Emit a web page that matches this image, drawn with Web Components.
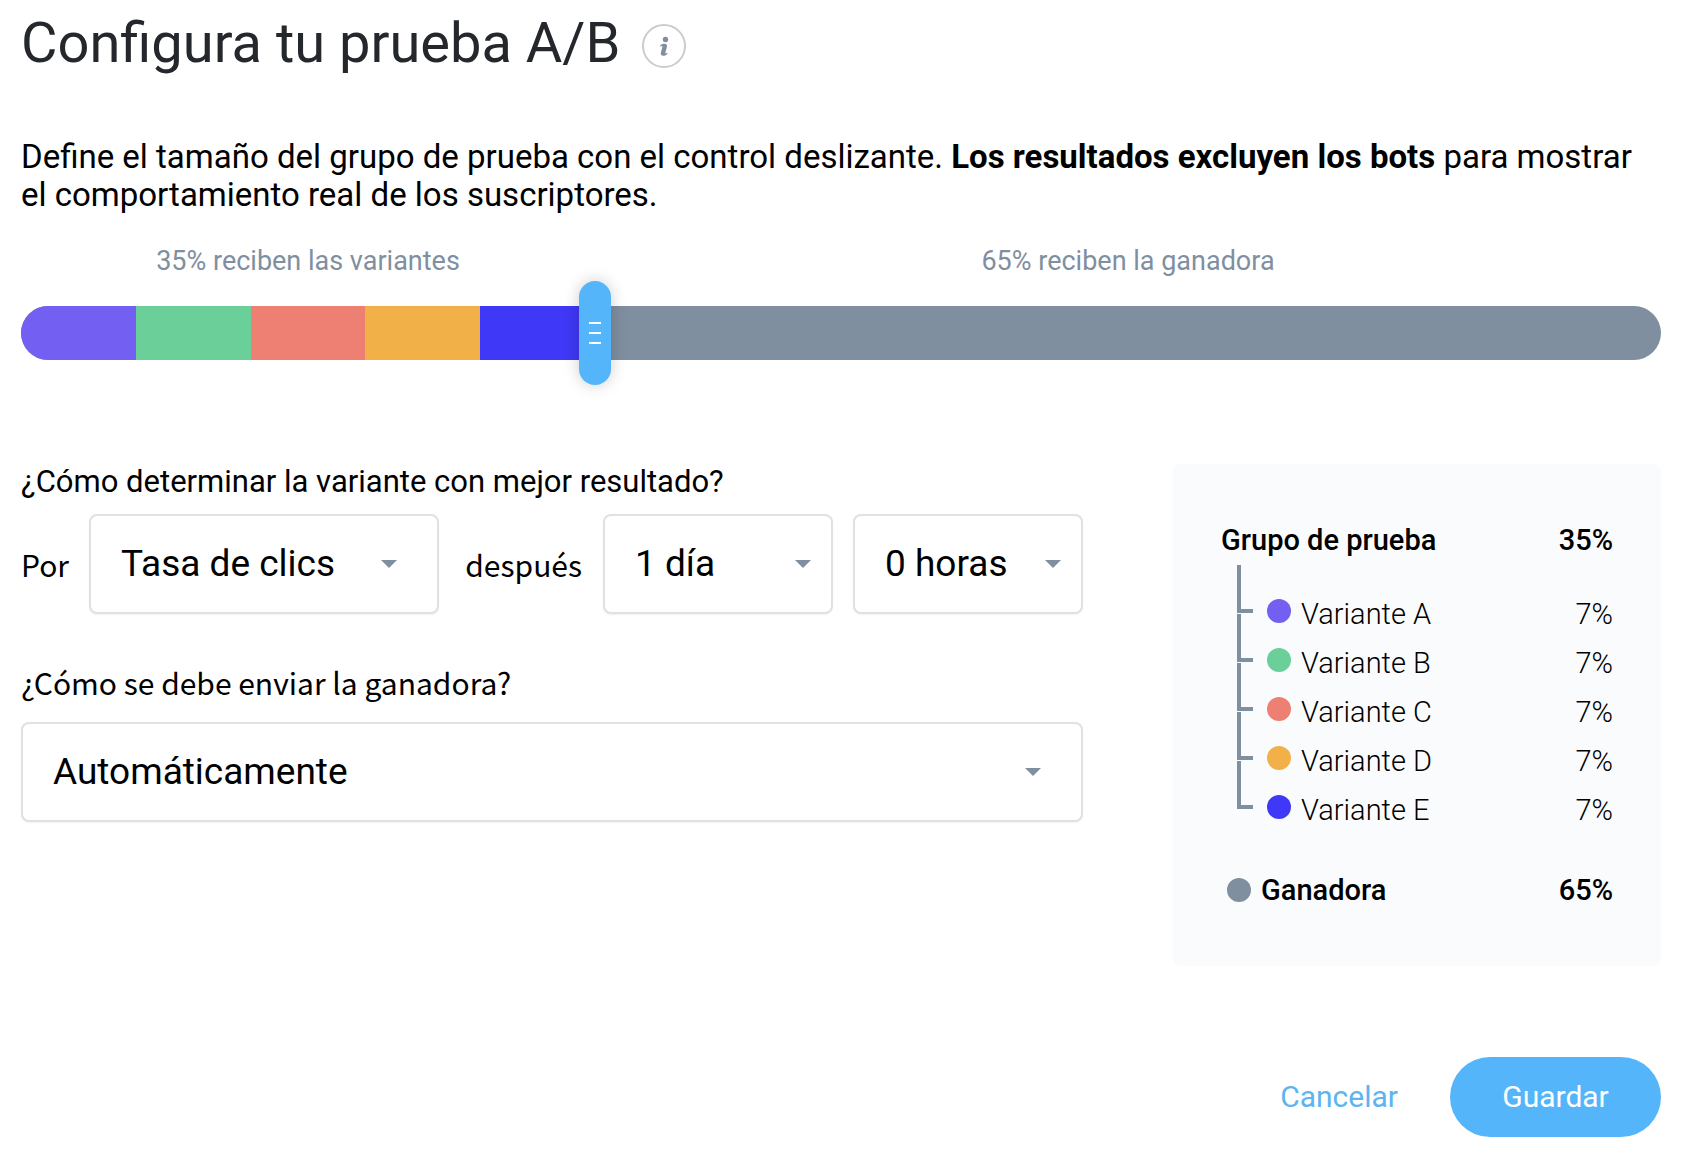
<!DOCTYPE html>
<html lang="es">
<head>
<meta charset="utf-8">
<meta name="viewport" content="width=device-width, initial-scale=1">
<title>Configura tu prueba A/B</title>
<style>
  :root {
    --slate: #7f8fa0;
    --blue: #54b5fa;
    --line: #e0e1e2;
    --panel: #fafbfd;
    --a: #735ff2;
    --b: #6acf99;
    --c: #ed7f73;
    --d: #f1b148;
    --e: #3f38f6;
  }
  body {
    margin: 0;
    background: #fff;
    color: #000;
    font: 400 33px/38px Roboto, "Liberation Sans", sans-serif;
  }
</style>
</head>
<body>
<ab-test-dialog></ab-test-dialog>

<template id="t-dialog">
  <style>
    :host { display: block; padding: 11px 27px 27px 21px; }
    header { display: flex; align-items: center; gap: 22px; }
    h1 { margin: 0; font-size: 56px; line-height: 64px; font-weight: 400; color: #24272c; }
    p { margin: 63px 0 0; }
    b { font-weight: 700; }
    ab-split { margin-top: 31px; }
    .columns { display: grid; grid-template-columns: minmax(0, 1fr) 488px; gap: 90px; margin-top: 79px; align-items: start; }
    footer { display: flex; justify-content: flex-end; align-items: center; gap: 52px; margin-top: 91px; }
  </style>
  <header>
    <h1>Configura tu prueba A/B</h1>
    <ab-info></ab-info>
  </header>
  <p>Define el tamaño del grupo de prueba con el control deslizante. <b>Los resultados excluyen los bots</b> para mostrar el comportamiento real de los suscriptores.</p>
  <ab-split></ab-split>
  <div class="columns">
    <ab-rules></ab-rules>
    <ab-summary></ab-summary>
  </div>
  <footer>
    <ab-button>Cancelar</ab-button>
    <ab-button primary>Guardar</ab-button>
  </footer>
</template>

<template id="t-info">
  <style>
    :host { display: block; padding-top: 6px; }
    button { display: block; box-sizing: border-box; width: 44px; height: 44px; padding: 0; border: 2px solid #cbcccd; border-radius: 50%; background: none; }
    svg { display: block; width: 40px; height: 40px; fill: var(--slate); }
  </style>
  <button type="button" aria-label="Más información">
    <svg viewBox="0 0 40 40" aria-hidden="true">
      <circle cx="21.5" cy="13.5" r="2.7"/>
      <path d="M16 19.7c1.2-1.4 2.8-2 4.4-2 2.2 0 3 1.300 2.500 3.200l-1.500 5.700c-.3 1.100.2 1.400 1.900.2l.4.700c-1.300 1.600-2.800 2.300-4.400 2.300-2.100 0-2.900-1.300-2.400-3.200l1.500-5.700c.3-1.100-.3-1.400-1.900-.4z"/>
    </svg>
  </button>
</template>

<template id="t-split">
  <style>
    :host { display: block; }
    .captions { display: grid; grid-template-columns: 35% 65%; text-align: center; font-size: 27px; line-height: 32px; color: var(--slate); }
    .slider { display: grid; align-items: center; margin-top: 4px; }
    .track, input { grid-area: 1 / 1; }
    .track { display: flex; height: 54px; border-radius: 27px; overflow: hidden; background: var(--slate); }
    .track i { flex: 0 0 7%; }
    input { -webkit-appearance: none; appearance: none; width: calc(100% + 32px); height: 104px; margin: 0 -16px; background: none; }
    input::-webkit-slider-runnable-track { height: 104px; background: none; }
    input::-webkit-slider-thumb {
      -webkit-appearance: none;
      width: 32px; height: 104px; border: 0; border-radius: 16px;
      background:
        linear-gradient(#fff, #fff) 10px 41px / 12px 2px no-repeat,
        linear-gradient(#fff, #fff) 10px 51px / 12px 2px no-repeat,
        linear-gradient(#fff, #fff) 10px 61px / 12px 2px no-repeat,
        var(--blue);
      box-shadow: 0 0 16px rgba(0, 0, 0, .2);
    }
  </style>
  <div class="captions">
    <label for="share">35% reciben las variantes</label>
    <span>65% reciben la ganadora</span>
  </div>
  <div class="slider">
    <div class="track">
      <i style="background:var(--a)"></i><i style="background:var(--b)"></i><i style="background:var(--c)"></i><i style="background:var(--d)"></i><i style="background:var(--e)"></i>
    </div>
    <input id="share" type="range" min="0" max="100" value="35">
  </div>
</template>

<template id="t-select">
  <style>
    :host { display: grid; align-items: center; --caret: 42px; }
    :host([narrow]) { --caret: 22px; }
    ::slotted(select) {
      -webkit-appearance: none; appearance: none;
      grid-area: 1 / 1; box-sizing: border-box; width: 100%; height: 100px; margin: 0; padding: 0 30px;
      border: 2px solid var(--line); border-radius: 8px; background: #fff; color: #000;
      font: 400 37px/44px Roboto, "Liberation Sans", sans-serif;
      box-shadow: 0 1px 2px rgba(0, 0, 0, .06);
    }
    svg { grid-area: 1 / 1; justify-self: end; margin-right: var(--caret); width: 16px; height: 8px; fill: var(--slate); pointer-events: none; z-index: 1; }
  </style>
  <slot></slot>
  <svg viewBox="0 0 16 8" aria-hidden="true"><path d="M0 0h16L8 8z"/></svg>
</template>

<template id="t-rules">
  <style>
    :host { display: block; }
    label { display: block; font-size: 31px; line-height: 36px; }
    .alt { font-family: "Noto Sans CJK JP", "Noto Sans", sans-serif; font-size: 30px; }
    .row { display: grid; grid-template-columns: 68fr 350fr 164fr 230fr 20fr 230fr; align-items: center; margin: 14px 0 50px; }
    .row label { line-height: 44px; }
    .row .mid { padding-right: 21px; text-align: right; }
    .row > :last-child { grid-column: 6; }
    ab-select.full { margin-top: 22px; }
  </style>
  <label for="metric">¿Cómo determinar la variante con mejor resultado?</label>
  <div class="row">
    <label class="alt" for="metric">Por</label>
    <ab-select><select id="metric"><option>Tasa de clics</option></select></ab-select>
    <label class="alt mid" for="days">después</label>
    <ab-select narrow><select id="days"><option>1 día</option></select></ab-select>
    <ab-select narrow><select id="hours" aria-label="Horas"><option>0 horas</option></select></ab-select>
  </div>
  <label class="alt" for="send">¿Cómo se debe enviar la ganadora?</label>
  <ab-select class="full"><select id="send"><option>Automáticamente</option></select></ab-select>
</template>

<template id="t-summary">
  <style>
    :host { display: block; box-sizing: border-box; padding: 56px 48px 56px; border-radius: 8px; background: var(--panel); }
    .total { display: flex; align-items: center; height: 40px; font-size: 29px; font-weight: 500; }
    .total span:last-child { margin-left: auto; }
    .dot { width: 24px; height: 24px; margin: 0 10px 0 6px; border-radius: 50%; background: var(--slate); }
    ul { list-style: none; margin: 4px 0 61px; padding: 0; }
  </style>
  <div class="total"><span>Grupo de prueba</span><span>35%</span></div>
  <ul>
    <ab-variant share="7%" style="--dot:var(--a)">Variante A</ab-variant>
    <ab-variant share="7%" style="--dot:var(--b)">Variante B</ab-variant>
    <ab-variant share="7%" style="--dot:var(--c)">Variante C</ab-variant>
    <ab-variant share="7%" style="--dot:var(--d)">Variante D</ab-variant>
    <ab-variant share="7%" style="--dot:var(--e)">Variante E</ab-variant>
  </ul>
  <div class="total"><i class="dot"></i><span>Ganadora</span><span>65%</span></div>
</template>

<template id="t-variant">
  <style>
    :host { display: flex; align-items: flex-end; height: 49px; font-size: 29px; line-height: 32px; font-weight: 300; }
    .branch { box-sizing: border-box; width: 16px; height: 48px; margin-left: 16px; border: solid var(--slate); border-width: 0 0 4px 4px; }
    .dot { width: 24px; height: 24px; margin: 0 10px -10px 14px; border-radius: 50%; background: var(--dot); }
    span { margin-bottom: -17px; }
    .share { margin-left: auto; }
  </style>
  <i class="branch"></i><i class="dot"></i><span><slot></slot></span><span class="share"></span>
</template>

<template id="t-button">
  <style>
    :host { display: block; }
    button { display: block; height: 80px; margin: 0; padding: 0; border: 0; background: none; color: #5eb4ee; font: 400 30px/36px Roboto, "Liberation Sans", sans-serif; }
    :host([primary]) button { min-width: 211px; padding: 0 51px; border-radius: 40px; background: var(--blue); color: #fff; }
  </style>
  <button type="button"><slot></slot></button>
</template>

<script>
  class AbElement extends HTMLElement {
    constructor() {
      super();
      const template = document.getElementById(this.constructor.template);
      this.attachShadow({ mode: 'open' }).append(template.content.cloneNode(true));
    }
  }
  class AbButton extends AbElement { static template = 't-button'; }
  class AbInfo extends AbElement { static template = 't-info'; }
  class AbSelect extends AbElement { static template = 't-select'; }
  class AbSplit extends AbElement { static template = 't-split'; }
  class AbRules extends AbElement { static template = 't-rules'; }
  class AbSummary extends AbElement { static template = 't-summary'; }
  class AbDialog extends AbElement { static template = 't-dialog'; }
  class AbVariant extends AbElement {
    static template = 't-variant';
    connectedCallback() {
      this.shadowRoot.querySelector('.share').textContent = this.getAttribute('share');
    }
  }
  customElements.define('ab-button', AbButton);
  customElements.define('ab-info', AbInfo);
  customElements.define('ab-select', AbSelect);
  customElements.define('ab-variant', AbVariant);
  customElements.define('ab-split', AbSplit);
  customElements.define('ab-rules', AbRules);
  customElements.define('ab-summary', AbSummary);
  customElements.define('ab-test-dialog', AbDialog);
</script>
</body>
</html>
